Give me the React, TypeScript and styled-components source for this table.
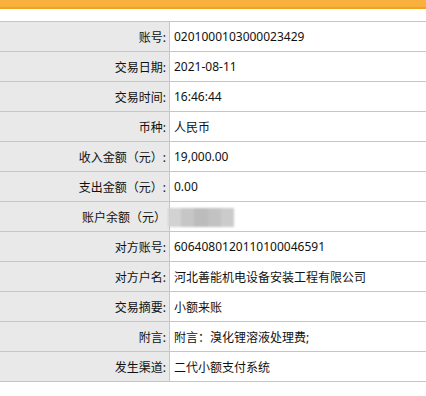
import React from 'react'
import styled, { createGlobalStyle } from 'styled-components'

const GlobalStyle = createGlobalStyle`
    html, body {
        margin: 0;
        padding: 0;
        background: #fff;
        font-family: "Noto Sans", "Noto Sans CJK SC", sans-serif;
        font-size: 12px;
        color: #111;
    }
`

const Page = styled.div`
    width: 426px;
    height: 396px;
    overflow: hidden;
    background: #fff;
`

const TopBar = styled.div`
    height: 7px;
    background: #f8b13f;
    border-bottom: 2px solid #f3a21c;
    margin-bottom: 12px;
`

const Table = styled.table`
    width: 100%;
    border-collapse: collapse;
    border-top: 1px solid #c6c6c6;
`

const Row = styled.tr`
    height: 30px;
    border-bottom: 1px solid #c6c6c6;
`

const Label = styled.td`
    width: 166px;
    padding: 0 3px 0 0;
    background: #e8e9e8;
    border-right: 1px solid #c6c6c6;
    text-align: right;
    white-space: nowrap;
    vertical-align: middle;
`

const Value = styled.td`
    padding: 0 0 0 4px;
    text-align: left;
    white-space: nowrap;
    vertical-align: middle;
`

const Masked = styled.div`
    display: flex;
    height: 19px;
    width: 66px;
    margin-left: -6px;
    margin-top: 1px;
    filter: blur(1.2px);
`

const MaskCell = styled.div`
    flex: 1;
    background: ${props => props.color};
`

interface Item {
    label: string
    value?: string
    masked?: boolean
}

const items: Item[] = [
    { label: '账号:', value: '0201000103000023429' },
    { label: '交易日期:', value: '2021-08-11' },
    { label: '交易时间:', value: '16:46:44' },
    { label: '币种:', value: '人民币' },
    { label: '收入金额（元）:', value: '19,000.00' },
    { label: '支出金额（元）:', value: '0.00' },
    { label: '账户余额（元）', masked: true },
    { label: '对方账号:', value: '6064080120110100046591' },
    { label: '对方户名:', value: '河北善能机电设备安装工程有限公司' },
    { label: '交易摘要:', value: '小额来账' },
    { label: '附言:', value: '附言：溴化锂溶液处理费;' },
    { label: '发生渠道:', value: '二代小额支付系统' },
]

const maskColors = ['#d2d2d2', '#c6c6c6', '#bcbcbc', '#c2c2c2', '#cbcbcb']

export default function App() {
    return <Page>
        <GlobalStyle />
        <TopBar />
        <Table>
            <tbody>
                {items.map(item => <Row key={item.label}>
                    <Label>{item.label}</Label>
                    <Value>
                        {item.masked
                            ? <Masked>{maskColors.map((c, i) => <MaskCell key={i} color={c} />)}</Masked>
                            : item.value}
                    </Value>
                </Row>)}
            </tbody>
        </Table>
    </Page>
}
